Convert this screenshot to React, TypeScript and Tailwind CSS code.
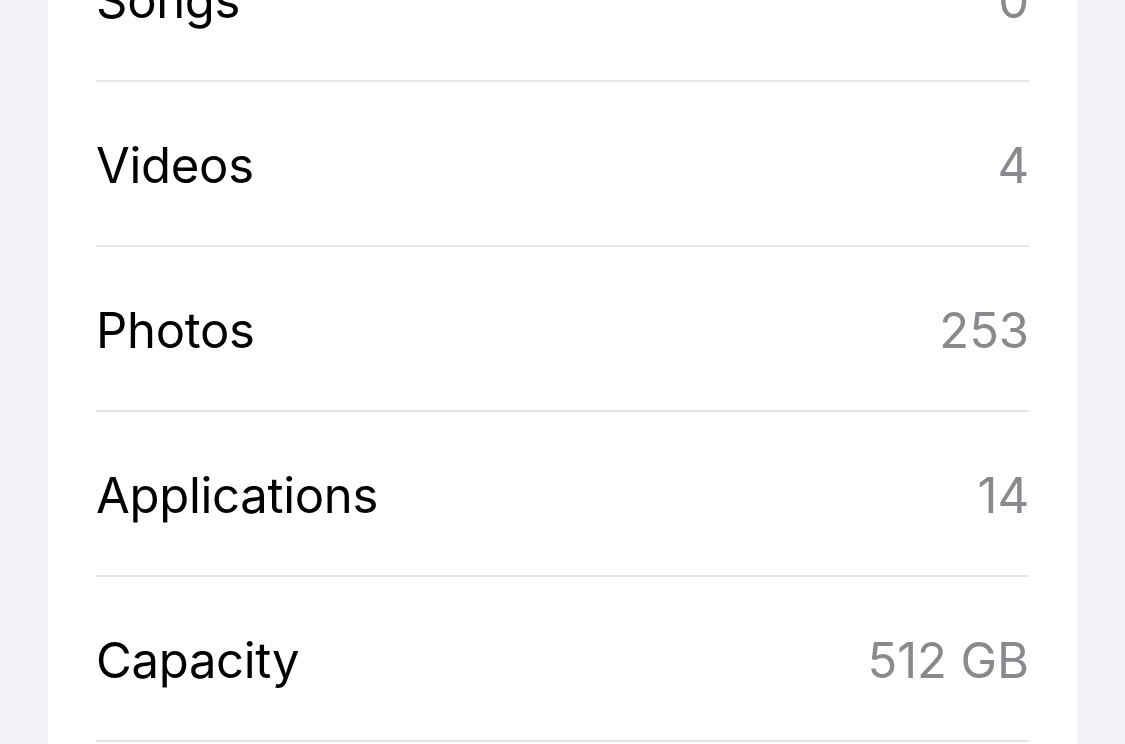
import React from "react";

const rows: [string, string][] = [
  ["Songs", "0"],
  ["Videos", "4"],
  ["Photos", "253"],
  ["Applications", "14"],
  ["Capacity", "512 GB"],
];

export default function App() {
  return (
    <div
      className="w-[1125px] h-[744px] overflow-hidden bg-[#f2f2f7] flex justify-start"
      style={{ fontFamily: "Inter, 'Noto Sans', sans-serif" }}
    >
      <div className="ml-[48px] w-[1029px] h-[840px] bg-white -mt-[83px] self-start">
        {rows.map(([label, value]) => (
          <div key={label} className="ml-[48px] mr-[48px] h-[165px] pt-[3px] border-b-2 border-[#e5e5ea] flex items-center justify-between">
            <span className="text-[49px] text-black tracking-[-0.3px] leading-none">{label}</span>
            <span className="text-[49px] text-[#8a8a8e] tracking-[-0.1px] leading-none">{value}</span>
          </div>
        ))}
      </div>
    </div>
  );
}
